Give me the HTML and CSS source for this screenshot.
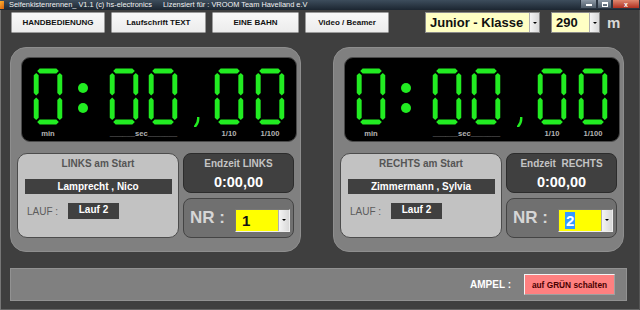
FILE: index.html
```html
<!DOCTYPE html>
<html lang="de">
  <head>
    <meta charset="UTF-8" />
    <title>Seifenkistenrennen</title>
    <link rel="stylesheet" href="styles.css">
  </head>
  <body>
    <!-- 7-Segment Ziffer "0" -->
    <svg class="svg-defs" aria-hidden="true">
      <symbol id="seg0" viewBox="0 0 30 58">
        <polygon points="4,3 6.5,0.5 23.5,0.5 26,3 23.5,5.5 6.5,5.5" />
        <polygon points="4,55 6.5,52.5 23.5,52.5 26,55 23.5,57.5 6.5,57.5" />
        <polygon points="3,5 5.5,7.5 5.5,25.5 3,28 0.5,25.5 0.5,7.5" />
        <polygon points="3,30 5.5,32.5 5.5,50.5 3,53 0.5,50.5 0.5,32.5" />
        <polygon points="27,5 29.5,7.5 29.5,25.5 27,28 24.5,25.5 24.5,7.5" />
        <polygon points="27,30 29.5,32.5 29.5,50.5 27,53 24.5,50.5 24.5,32.5" />
      </symbol>
    </svg>

    <div class="window">
      <div class="titlebar">
        <span class="app-icon"></span>
        <span class="title">Seifenkistenrennen_ V1.1 (c) hs-electronics</span>
        <span class="title licence">Lizensiert für : VROOM Team Havelland e.V</span>
        <div class="controls">
          <span class="ctl ctl-min"><i></i></span>
          <span class="ctl ctl-max"><i></i></span>
          <span class="ctl ctl-close">x</span>
        </div>
      </div>

      <div class="toolbar">
        <button class="tool-btn btn-hand">HANDBEDIENUNG</button>
        <button class="tool-btn btn-text">Laufschrift TEXT</button>
        <button class="tool-btn btn-bahn">EINE BAHN</button>
        <button class="tool-btn btn-video">Video / Beamer</button>

        <div class="combo combo-class">
          <span class="combo-text">Junior - Klasse</span>
          <span class="combo-arrow"></span>
        </div>
        <div class="combo combo-dist">
          <span class="combo-text">290</span>
          <span class="combo-arrow"></span>
        </div>
        <span class="unit">m</span>
      </div>

      <div class="lanes">
        <!-- Bahn links -->
        <section class="lane">
          <div class="display">
            <div class="cell">
              <svg class="digit"><use href="#seg0" /></svg>
              <span class="unit-label">min</span>
            </div>
            <div class="colon"><i></i><i></i></div>
            <div class="cell cell-sec">
              <div class="pair">
                <svg class="digit"><use href="#seg0" /></svg>
                <svg class="digit"><use href="#seg0" /></svg>
              </div>
              <span class="unit-label">______sec_______</span>
            </div>
            <div class="comma">
              <svg viewBox="0 0 6 10"><path d="M4.2 0.5 Q4.6 6 1 9.5" /></svg>
            </div>
            <div class="cell cell-tenth">
              <svg class="digit"><use href="#seg0" /></svg>
              <span class="unit-label">1/10</span>
            </div>
            <div class="cell cell-hundredth">
              <svg class="digit"><use href="#seg0" /></svg>
              <span class="unit-label">1/100</span>
            </div>
          </div>

          <div class="lane-info">
            <div class="start-box">
              <div class="start-title">LINKS am Start</div>
              <div class="driver">Lamprecht , Nico</div>
              <div class="run-row">
                <span class="run-label">LAUF :</span>
                <span class="run-value">Lauf 2</span>
              </div>
            </div>
            <div class="side-col">
              <div class="endtime">
                <div class="endtime-title">Endzeit LINKS</div>
                <div class="endtime-value">0:00,00</div>
              </div>
              <div class="nr-box">
                <span class="nr-label">NR :</span>
                <div class="combo combo-nr">
                  <span class="combo-text">1</span>
                  <span class="combo-arrow"></span>
                </div>
              </div>
            </div>
          </div>
        </section>

        <!-- Bahn rechts -->
        <section class="lane">
          <div class="display">
            <div class="cell">
              <svg class="digit"><use href="#seg0" /></svg>
              <span class="unit-label">min</span>
            </div>
            <div class="colon"><i></i><i></i></div>
            <div class="cell cell-sec">
              <div class="pair">
                <svg class="digit"><use href="#seg0" /></svg>
                <svg class="digit"><use href="#seg0" /></svg>
              </div>
              <span class="unit-label">______sec_______</span>
            </div>
            <div class="comma">
              <svg viewBox="0 0 6 10"><path d="M4.2 0.5 Q4.6 6 1 9.5" /></svg>
            </div>
            <div class="cell cell-tenth">
              <svg class="digit"><use href="#seg0" /></svg>
              <span class="unit-label">1/10</span>
            </div>
            <div class="cell cell-hundredth">
              <svg class="digit"><use href="#seg0" /></svg>
              <span class="unit-label">1/100</span>
            </div>
          </div>

          <div class="lane-info">
            <div class="start-box">
              <div class="start-title">RECHTS am Start</div>
              <div class="driver">Zimmermann , Sylvia</div>
              <div class="run-row">
                <span class="run-label">LAUF :</span>
                <span class="run-value">Lauf 2</span>
              </div>
            </div>
            <div class="side-col">
              <div class="endtime">
                <div class="endtime-title">Endzeit&nbsp; RECHTS</div>
                <div class="endtime-value">0:00,00</div>
              </div>
              <div class="nr-box">
                <span class="nr-label">NR :</span>
                <div class="combo combo-nr">
                  <span class="combo-text"><span class="selected">2</span></span>
                  <span class="combo-arrow"></span>
                </div>
              </div>
            </div>
          </div>
        </section>
      </div>

      <div class="ampel-bar">
        <span class="ampel-label">AMPEL :</span>
        <button class="ampel-btn">auf GRÜN schalten</button>
      </div>
    </div>
  </body>
</html>
```

FILE: styles.css
```css
/* Grundeinstellungen */
* {
  margin: 0;
  padding: 0;
  box-sizing: border-box;
}

body {
  font-family: "Liberation Sans", Arial, sans-serif;
  background-color: #3f3f3f;
  width: 640px;
  height: 310px;
  overflow: hidden;
}

.svg-defs {
  display: block;
  width: 0;
  height: 0;
}

.window {
  height: 310px;
  box-shadow: inset 1px 0 #777, inset -1px 0 #555, inset 0 -1px #666;
}

/* Titelleiste */
.titlebar {
  height: 10px;
  display: flex;
  align-items: center;
  background: linear-gradient(#3d4d5c, #1c2631);
  color: #f2f2f2;
  font-size: 7.4px;
  line-height: 10px;
  white-space: nowrap;
}

.app-icon {
  width: 4px;
  height: 8px;
  margin-right: 5px;
  background: linear-gradient(135deg, #ffb030, #d06010);
}

.title.licence {
  margin-left: 11px;
}

.controls {
  margin-left: auto;
  display: flex;
  height: 9px;
  align-self: flex-start;
}

.ctl {
  display: flex;
  align-items: center;
  justify-content: center;
  height: 9px;
  border: 1px solid #2a3440;
  border-top: none;
  background: linear-gradient(#8d99a6, #4e5b68);
}

.ctl-min {
  width: 17px;
}

.ctl-min i {
  width: 6px;
  height: 2px;
  margin-top: 2px;
  background: #fff;
}

.ctl-max {
  width: 15px;
}

.ctl-max i {
  width: 6px;
  height: 5px;
  border: 1px solid #fff;
  border-top-width: 2px;
}

.ctl-close {
  width: 28px;
  background: linear-gradient(#e08870, #b03020);
  color: #fff;
  font-size: 7px;
  font-weight: bold;
  line-height: 9px;
}

/* Werkzeugleiste */
.toolbar {
  display: flex;
  align-items: center;
  height: 21px;
  margin-top: 2px;
  padding-left: 11px;
}

.tool-btn {
  height: 21px;
  margin-right: 6px;
  font-family: inherit;
  font-size: 8px;
  font-weight: bold;
  color: #111;
  background: linear-gradient(#f8f8f8, #ececec);
  border: 1px solid #9a9a9a;
  border-radius: 1px;
}

.btn-hand {
  width: 94px;
}

.btn-text {
  width: 95px;
}

.btn-bahn {
  width: 87px;
}

.btn-video {
  width: 84px;
}

.combo {
  display: flex;
  height: 21px;
  border: 1px solid #8a8a8a;
  background-color: #ffffc4;
}

.combo-text {
  flex: 1;
  display: flex;
  align-items: center;
  padding-left: 4px;
  font-size: 13px;
  font-weight: bold;
  color: #111;
}

.combo-arrow {
  width: 10px;
  display: flex;
  align-items: center;
  justify-content: center;
  background: linear-gradient(to right, #f4f4f4, #d8d8d8);
  border-left: 1px solid #b0b0b0;
}

.combo-arrow::after {
  content: "";
  border-left: 2px solid transparent;
  border-right: 2px solid transparent;
  border-top: 2px solid #000;
}

.combo-class {
  width: 115px;
  margin-left: 30px;
}

.combo-dist {
  width: 49px;
  margin-left: 11px;
}

.unit {
  margin-left: 7px;
  font-size: 15px;
  font-weight: bold;
  color: #d8d8d8;
}

/* Bahnen */
.lanes {
  display: flex;
  gap: 32px;
  margin-top: 14px;
  padding-left: 10px;
}

.lane {
  width: 291px;
  height: 205px;
  padding: 10px 0 0 6px;
  background-color: #808080;
  border: 1px solid #8e8e8e;
  border-radius: 16px;
}

.display {
  display: flex;
  align-items: flex-start;
  width: 276px;
  height: 85px;
  margin-left: 4px;
  margin-top: -1px;
  padding: 10px 0 0 11px;
  background-color: #000;
  border: 1px solid #4a4a4a;
  border-radius: 9px;
}

.cell {
  display: flex;
  flex-direction: column;
  align-items: center;
}

.digit {
  display: block;
  width: 30px;
  height: 57px;
  fill: #22ec22;
}

.pair {
  display: flex;
  gap: 9px;
}

.unit-label {
  margin-top: 5px;
  font-size: 7.6px;
  font-weight: bold;
  line-height: 8px;
  color: #b4b4b4;
  white-space: nowrap;
}

.colon {
  display: flex;
  flex-direction: column;
  gap: 10px;
  margin: 15px 0 0 15px;
}

.colon i {
  width: 10px;
  height: 10px;
  border-radius: 50%;
  background-color: #22ec22;
}

.cell-sec {
  margin-left: 21px;
}

.comma {
  margin: 49px 0 0 16px;
}

.comma svg {
  display: block;
  width: 6px;
  height: 10px;
  fill: none;
  stroke: #22ec22;
  stroke-width: 2.4;
  stroke-linecap: round;
}

.cell-tenth {
  margin-left: 14px;
}

.cell-hundredth {
  margin-left: 11px;
}

/* Info unter der Anzeige */
.lane-info {
  display: flex;
  gap: 4px;
  margin-top: 11px;
}

.start-box {
  width: 162px;
  height: 85px;
  padding-top: 4px;
  background-color: #c2c2c2;
  border: 1px solid #4c4c4c;
  border-radius: 10px;
}

.start-title {
  text-align: center;
  font-size: 10px;
  font-weight: bold;
  line-height: 12px;
  color: #555;
}

.driver {
  width: 147px;
  height: 15px;
  margin: 9px auto 0;
  background-color: #404040;
  color: #fff;
  text-align: center;
  font-size: 10px;
  font-weight: bold;
  line-height: 15px;
}

.run-row {
  display: flex;
  align-items: center;
  margin: 9px 0 0 9px;
}

.run-label {
  width: 41px;
  font-size: 10px;
  color: #5c5c5c;
}

.run-value {
  width: 51px;
  height: 16px;
  padding-top: 1px;
  background-color: #404040;
  color: #fff;
  text-align: center;
  font-size: 10px;
  font-weight: bold;
  line-height: 11px;
}

.side-col {
  display: flex;
  flex-direction: column;
  gap: 5px;
  width: 111px;
}

.endtime {
  height: 40px;
  padding-top: 4px;
  background-color: #404040;
  border: 1px solid #2c2c2c;
  border-radius: 8px;
  text-align: center;
}

.endtime-title {
  font-size: 10px;
  font-weight: bold;
  line-height: 12px;
  color: #c4c4c4;
}

.endtime-value {
  margin-top: 4px;
  font-size: 14.5px;
  font-weight: bold;
  line-height: 16px;
  color: #fff;
}

.nr-box {
  display: flex;
  align-items: center;
  height: 40px;
  padding-left: 6px;
  background-color: #707070;
  border: 1px solid #444;
  border-radius: 8px;
}

.nr-label {
  width: 45px;
  font-size: 17px;
  font-weight: bold;
  color: #d6d6d6;
}

.combo-nr {
  width: 55px;
  height: 23px;
  margin-top: 4px;
  background-color: #ffff00;
  border-color: #777 #eee #eee #777;
}

.combo-nr .combo-text {
  font-size: 15px;
  padding-left: 6px;
}

.combo-nr .combo-arrow {
  width: 11px;
}

.selected {
  padding: 0 1px;
  background-color: #3399ff;
  color: #fff;
}

/* Ampel */
.ampel-bar {
  display: flex;
  align-items: center;
  justify-content: flex-end;
  gap: 13px;
  width: 617px;
  height: 33px;
  margin: 16px 0 0 10px;
  padding-right: 11px;
  background-color: #808080;
  border: 1px solid #929292;
}

.ampel-label {
  font-size: 10px;
  font-weight: bold;
  color: #fff;
}

.ampel-btn {
  width: 91px;
  height: 21px;
  font-family: inherit;
  font-size: 8.3px;
  font-weight: bold;
  color: #4a0000;
  background-color: #ff8080;
  border: 1px solid;
  border-color: #f4f4f4 #a0a0a0 #a0a0a0 #f4f4f4;
}
```
